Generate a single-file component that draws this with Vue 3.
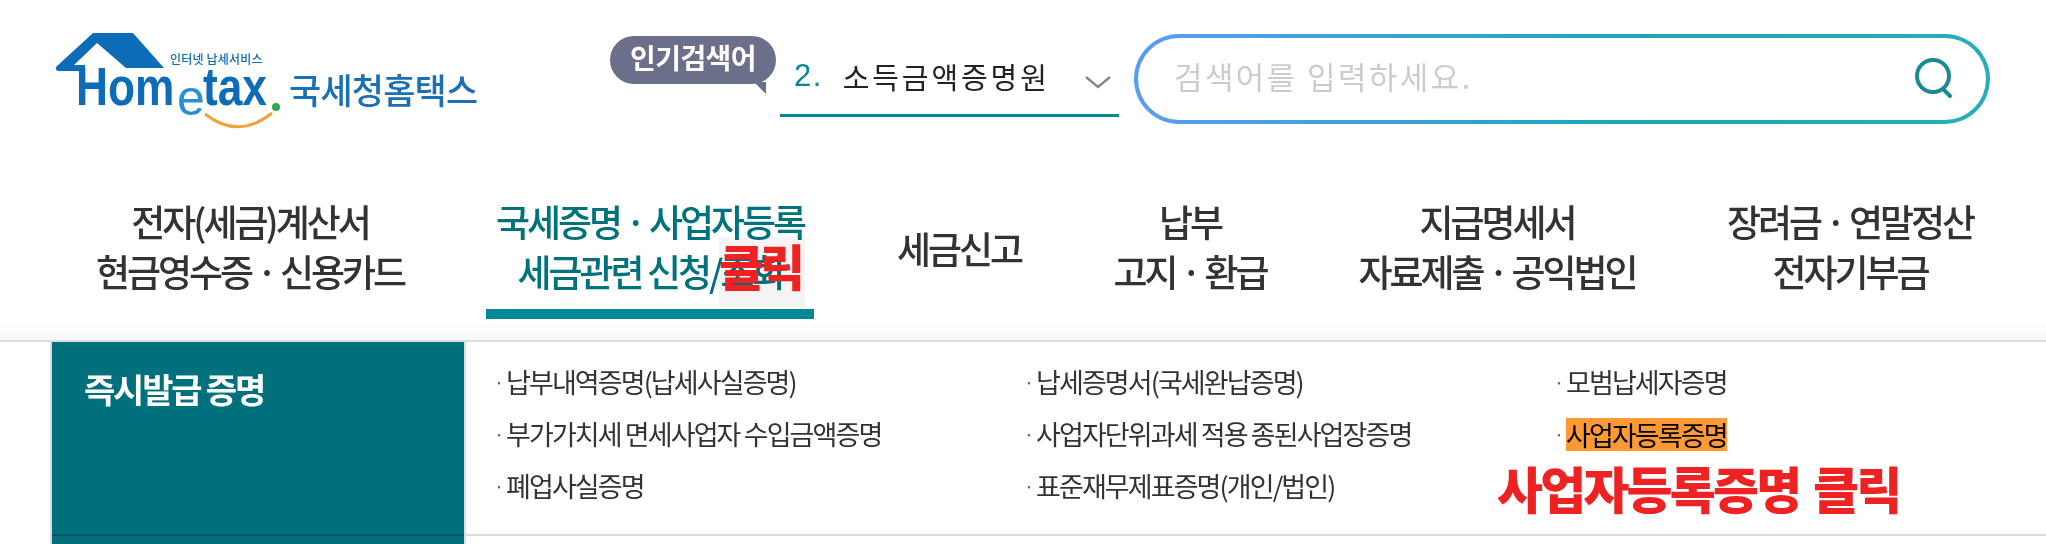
<script setup>
const navItems = [
  { lines: ['전자(세금)계산서', '현금영수증 · 신용카드'], w: 486, cls: 'first' },
  { lines: ['국세증명 · 사업자등록', '세금관련 신청/조회'], w: 328, cls: 'active' },
  { lines: ['세금신고'], w: 290, cls: 'single' },
  { lines: ['납부', '고지 · 환급'], w: 172 },
  { lines: ['지급명세서', '자료제출 · 공익법인'], w: 442 },
  { lines: ['장려금 · 연말정산', '전자기부금'], w: 264 },
]
const cols = [
  ['납부내역증명(납세사실증명)', '부가가치세 면세사업자 수입금액증명', '폐업사실증명'],
  ['납세증명서(국세완납증명)', '사업자단위과세 적용 종된사업장증명', '표준재무제표증명(개인/법인)'],
  ['모범납세자증명', '사업자등록증명'],
]
</script>

<template>
  <div class="page">
    <header class="top">
      <div class="logo">
        <svg class="mark" width="500" height="140" viewBox="0 0 500 140">
          <path d="M93 33 L133 33 L164 68 L126 68 L97 43 L74 65 L85 65 L85 71 L58 71 Q54 69 57 66 Z" fill="#0d6cb8" />
          <path d="M205 114 Q238 140 272 113" fill="none" stroke="#f0a33a" stroke-width="3" />
          <circle cx="276" cy="107" r="4" fill="#2fa84f" />
        </svg>
        <span class="brand-small">인터넷 납세서비스</span>
        <span class="brand hom">Hom</span>
        <span class="brand e">e</span>
        <span class="brand tax">tax</span>
        <span class="brand-ko">국세청홈택스</span>
      </div>
      <div class="bubble">인기검색어</div>
      <div class="select">
        <span class="num">2.</span>
        <span class="sel-text">소득금액증명원</span>
        <svg class="chev" width="26" height="14" viewBox="0 0 26 14"><path d="M1 2 L13 12 L25 2" fill="none" stroke="#888" stroke-width="2.4" /></svg>
      </div>
      <div class="search">
        <div class="search-in">
          <span class="ph">검색어를 입력하세요.</span>
          <svg width="44" height="44" viewBox="0 0 44 44"><circle cx="21" cy="19" r="16" fill="none" stroke="#1b8a96" stroke-width="4" /><path d="M31 32 L38 39" stroke="#1b8a96" stroke-width="4" stroke-linecap="round" fill="none" /></svg>
        </div>
      </div>
    </header>

    <nav class="nav">
      <div v-for="n in navItems" :key="n.lines[0]" class="nav-item" :class="n.cls" :style="{ width: n.w + 'px' }">
        <div v-for="l in n.lines" :key="l">{{ l }}</div>
        <template v-if="n.cls === 'active'">
          <div class="click-box"></div>
          <span class="click-text">클릭</span>
        </template>
      </div>
    </nav>

    <section class="panel">
      <div class="side">
        <div class="side-main"><span>즉시발급 증명</span></div>
      </div>
      <div class="content">
        <ul v-for="(c, i) in cols" :key="i" class="col">
          <li v-for="t in c" :key="t"><i>·</i><span :class="{ hl: t === '사업자등록증명' }">{{ t }}</span></li>
        </ul>
        <div class="note">사업자등록증명 클릭</div>
      </div>
    </section>
  </div>
</template>

<style>
html, body { margin: 0; background: #fff; }
</style>
<style scoped>
.page { width: 2046px; height: 544px; overflow: hidden; background: #fff; font-family: "Noto Sans CJK KR", "Noto Sans", sans-serif; color: #333; }
.top { height: 158px; position: relative; }
.logo { position: absolute; inset: 0 auto auto 0; width: 604px; height: 158px; filter: blur(.5px); }
.mark { position: absolute; left: 0; top: 0; }
.brand-small { position: absolute; left: 170px; top: 50px; font-size: 12px; line-height: 18px; font-weight: 500; color: #0d6cb8; letter-spacing: .2px; white-space: nowrap; }
.brand { position: absolute; font: 700 54px/60px "Liberation Sans", sans-serif; color: #0d6cb8; transform: scaleX(.82); transform-origin: left; }
.hom { left: 76px; top: 56px; }
.tax { left: 203px; top: 56px; }
.e { left: 177px; top: 68px; font-weight: 400; font-size: 50px; color: #2a90cf; transform: none; }
.brand-ko { position: absolute; left: 289px; top: 66px; font-size: 35px; line-height: 46px; font-weight: 500; color: #1a6fb5; letter-spacing: -.8px; white-space: nowrap; }
.bubble { position: absolute; left: 610px; top: 36px; width: 166px; height: 48px; border-radius: 24px; background: #6b6f8a; color: #fff; font-size: 28px; font-weight: 700; line-height: 43px; text-align: center; letter-spacing: -.6px; }
.bubble::after { content: ""; position: absolute; right: 10px; bottom: -10px; border-top: 12px solid #6b6f8a; border-left: 12px solid transparent; }
.select { position: absolute; left: 780px; top: 44px; width: 339px; height: 70px; border-bottom: 3px solid #008898; display: flex; align-items: center; }
.num { color: #008898; font: 400 31px "Liberation Sans", sans-serif; margin: -7px 0 0 14px; letter-spacing: 1.4px; }
.sel-text { font-size: 29px; color: #222; margin: -7px 0 0 20px; letter-spacing: 2.9px; white-space: nowrap; }
.chev { position: absolute; left: 305px; top: 31px; }
.search { position: absolute; left: 1134px; top: 34px; width: 856px; height: 90px; box-sizing: border-box; padding: 4px; border-radius: 45px; background: linear-gradient(90deg, #5b9df0, #18a8b8 60%, #28adbb); }
.search-in { height: 100%; border-radius: 41px; background: #fff; display: flex; align-items: center; justify-content: space-between; padding: 0 30px 0 36px; }
.ph { font-size: 31px; color: #ccc; letter-spacing: 2.4px; margin-top: -8px; }
.nav { height: 184px; display: flex; box-sizing: border-box; border-bottom: 2px solid #ddd; background: linear-gradient(#fff 88%, #f8f8f8); padding-top: 38px; }
.nav-item { flex: none; box-sizing: border-box; height: 123px; position: relative; text-align: center; font-size: 37px; line-height: 50px; font-weight: 500; letter-spacing: -3px; color: #333; white-space: nowrap; }
.first { padding-left: 14px; }
.single { padding-top: 27px; }
.active { color: #00727c; border-bottom: 10px solid #008898; }
.click-box { position: absolute; left: 233px; top: 41px; width: 86px; height: 70px; background: #f4f4f4; mix-blend-mode: multiply; }
.click-text { position: absolute; left: 233px; top: 44px; color: #ee2222; font-size: 49px; font-weight: 900; line-height: 50px; letter-spacing: -4px; }
.panel { display: flex; height: 202px; }
.side { width: 412px; margin-left: 50px; border-left: 2px solid #ddd; border-right: 2px solid #ddd; flex: none; background: #00707c; }
.side-main { height: 194px; border-bottom: 2px solid #0b5560; color: #fff; font-size: 34px; font-weight: 700; letter-spacing: -2.2px; padding: 25px 32px; box-sizing: border-box; line-height: 44px; }
.content { flex: 1; position: relative; display: flex; padding-left: 28px; height: 192px; border-bottom: 2px solid #ddd; }
.col { list-style: none; margin: 0; padding: 14px 0 0; width: 530px; flex: none; }
.col li { height: 52px; line-height: 52px; font-size: 27px; letter-spacing: -1.9px; color: #333; display: flex; align-items: center; white-space: nowrap; }
.col i { font-style: normal; width: 12px; font-size: 18px; color: #666; }
.hl { background: #ff9933; color: #000; line-height: 33px; height: 33px; }
.note { position: absolute; left: 1031px; top: 115px; color: #ee2222; font-size: 50px; line-height: 60px; font-weight: 900; letter-spacing: -2.8px; word-spacing: 5px; white-space: nowrap; }
</style>
